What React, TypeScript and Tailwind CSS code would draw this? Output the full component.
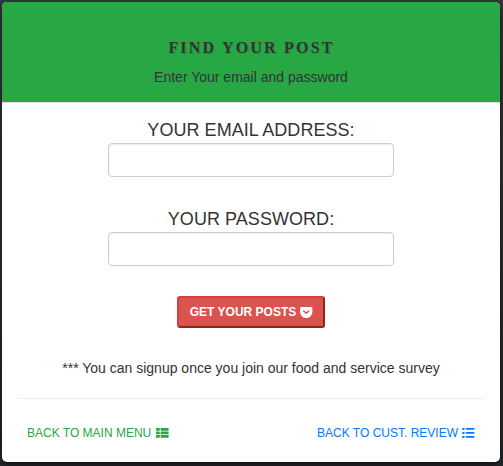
import React from "react";

function PocketIcon() {
  return (
    <svg className="h-[11px] w-[13px] shrink-0" viewBox="0 0 13 11" fill="none">
      <path d="M1.4 0h9.7a1.3 1.3 0 0 1 1.3 1.3v3.6a6.15 6.15 0 0 1-12.3 0V1.3A1.3 1.3 0 0 1 1.4 0Z" fill="#fff" />
      <path d="M3.7 4 6.25 6.3 8.8 4" stroke="#d9534f" strokeWidth="1.4" strokeLinecap="round" strokeLinejoin="round" />
    </svg>
  );
}

function ThListIcon() {
  return (
    <svg className="h-[10px] w-[13px] shrink-0" viewBox="0 0 13 10" fill="currentColor">
      {[0, 3.5, 7].map((y) => (
        <g key={y}>
          <rect x="0" y={y} width="3.8" height="2.7" rx="0.5" />
          <rect x="4.6" y={y} width="8" height="2.7" rx="0.5" />
        </g>
      ))}
    </svg>
  );
}

function ListIcon() {
  return (
    <svg className="h-[10px] w-[13px] shrink-0" viewBox="0 0 13 10" fill="currentColor">
      {[0, 4, 8].map((y) => (
        <g key={y}>
          <rect x="0.2" y={y} width="2.4" height="2" rx="0.4" />
          <rect x="3.8" y={y} width="8.6" height="1.8" rx="0.3" />
        </g>
      ))}
    </svg>
  );
}

function Field({ label, type }: { label: string; type: string }) {
  return (
    <label className="flex flex-col items-center">
      <span className="text-[18px] leading-[26px] tracking-[0.05px] text-[#333]">{label}</span>
      <input
        type={type}
        className="h-[34px] w-[286px] rounded-[4px] border border-[#ccc] bg-white px-3 shadow-[inset_0_1px_1px_rgba(0,0,0,0.075)] outline-none"
      />
    </label>
  );
}

export default function App() {
  return (
    <div className="h-[466px] w-[503px] bg-gradient-to-b from-[#37393b] to-[#25282c] pt-[2px] pl-[2px] font-['Liberation_Sans',Arial,sans-serif] text-[14px] text-[#333]">
      <main className="flex h-[460px] w-[498px] flex-col overflow-hidden rounded-[5px] bg-white shadow-[0_2px_6px_rgba(0,0,0,0.7)]">
        <header className="h-[101px] shrink-0 border-b border-[#dee2e6] bg-[#28a745] pt-[36px] text-center">
          <h1 className="pl-[1px] font-['Liberation_Serif',serif] text-[16px] leading-5 font-bold tracking-[2.2px] [text-shadow:1px_1px_1px_rgba(0,0,0,0.12)]">
            FIND YOUR POST
          </h1>
          <p className="mt-[9px] leading-5">Enter Your email and password</p>
        </header>
        <form className="flex flex-col items-center pt-[14px]">
          <Field label="YOUR EMAIL ADDRESS:" type="email" />
          <div className="mt-[29px]">
            <Field label="YOUR PASSWORD:" type="password" />
          </div>
          <button
            type="button"
            className="mt-[30px] flex h-[32px] w-[148px] items-center justify-center gap-1 rounded-[3px] border-2 border-t-[#d43f3a] border-r-[#8b2522] border-b-[#8b2522] border-l-[#d43f3a] bg-[#d9534f] pl-[1px] text-[12px] font-bold whitespace-nowrap text-white"
          >
            GET YOUR POSTS
            <PocketIcon />
          </button>
          <p className="mt-[30px] leading-5">*** You can signup once you join our food and service survey</p>
        </form>
        <footer className="mx-[15px] mt-5 flex justify-between border-t border-[#eee] px-[10px] pt-[26px] text-[12px] leading-4">
          <a className="flex items-center gap-[5px] text-[#28a745]">
            BACK TO MAIN MENU
            <ThListIcon />
          </a>
          <a className="flex items-center gap-1 text-[#007bff]">
            BACK TO CUST. REVIEW
            <ListIcon />
          </a>
        </footer>
      </main>
    </div>
  );
}
